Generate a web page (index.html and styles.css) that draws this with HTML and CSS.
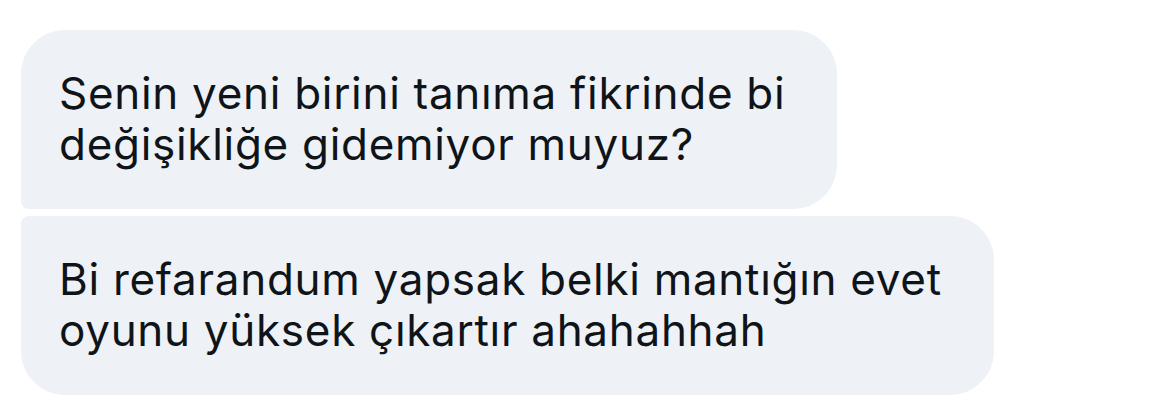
FILE: index.html
```html
<!DOCTYPE html>
<html lang="tr">
<head>
<meta charset="utf-8">
<link rel="stylesheet" href="styles.css">
</head>
<body>
<div class="thread">
  <div class="bubble first">Senin yeni birini tanıma fikrinde bi<br>değişikliğe gidemiyor muyuz?</div>
  <div class="bubble last">Bi refarandum yapsak belki mantığın evet<br>oyunu yüksek çıkartır ahahahhah</div>
</div>
</body>
</html>
```

FILE: styles.css
```css
html, body {
  margin: 0;
  background: #ffffff;
}
.thread {
  display: flex;
  flex-direction: column;
  align-items: flex-start;
  gap: 7px;
  padding: 30px 0 0 21px;
}
.bubble {
  background: #eef1f5;
  color: #0f1419;
  font-family: Inter, "Noto Sans", sans-serif;
  font-size: 44px;
  letter-spacing: 0.7px;
  line-height: 51px;
  padding: 38px 52px 39px 38px;
  white-space: nowrap;
}
.first {
  border-radius: 44px 44px 44px 8px;
}
.last {
  border-radius: 8px 44px 44px 44px;
}
```
